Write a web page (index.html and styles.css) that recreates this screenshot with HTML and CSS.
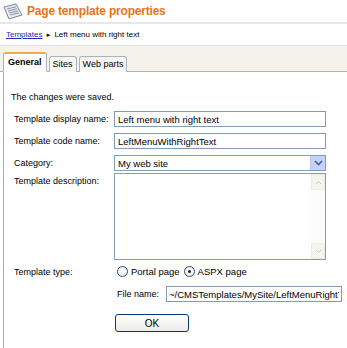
FILE: index.html
```html
<!DOCTYPE html>
<html lang="en">
<head>
    <meta charset="UTF-8">
    <title>Page template properties</title>
    <link rel="stylesheet" href="styles.css">
</head>
<body>
    <div class="header">
        <svg class="header-icon" width="22" height="17" viewBox="0 0 22 17">
            <path d="M2 4 L14 1 L20 12 L7 16 Z" fill="#e6eaf0" stroke="#7b8796" stroke-width="1"/>
            <path d="M5 6 L14 3.8 M6 8 L15 5.8 M7 10 L16 7.8 M8 12 L17 9.8" stroke="#8a96a6" stroke-width="1"/>
        </svg>
        <h1>Page template properties</h1>
    </div>

    <div class="breadcrumb">
        <a href="#">Templates</a>
        <span class="arrow">&#9658;</span>
        <span>Left menu with right text</span>
    </div>

    <div class="tabs">
        <div class="tab active">General</div>
        <div class="tab">Sites</div>
        <div class="tab">Web parts</div>
    </div>

    <div class="content">
        <p class="info">The changes were saved.</p>

        <div class="row">
            <label>Template display name:</label>
            <input class="field" type="text" value="Left menu with right text">
        </div>

        <div class="row">
            <label>Template code name:</label>
            <input class="field" type="text" value="LeftMenuWithRightText">
        </div>

        <div class="row">
            <label>Category:</label>
            <div class="select">
                <span>My web site</span>
                <span class="select-btn">
                    <svg width="9" height="6" viewBox="0 0 9 6"><path d="M1 1 L4.5 4.5 L8 1" fill="none" stroke="#4d6185" stroke-width="1.6"/></svg>
                </span>
            </div>
        </div>

        <div class="row row-top row-desc">
            <label>Template description:</label>
            <div class="textarea">
                <div class="scrollbar">
                    <span class="sb-arrow">
                        <svg width="7" height="5" viewBox="0 0 7 5"><path d="M1 4 L3.5 1.5 L6 4" fill="none" stroke="#c4c8ce" stroke-width="1"/></svg>
                    </span>
                    <span class="sb-arrow">
                        <svg width="7" height="5" viewBox="0 0 7 5"><path d="M1 1 L3.5 3.5 L6 1" fill="none" stroke="#c4c8ce" stroke-width="1"/></svg>
                    </span>
                </div>
            </div>
        </div>

        <div class="row row-top row-type">
            <label>Template type:</label>
            <div class="type">
                <div class="radios">
                    <span class="radio"></span><span class="radio-text">Portal page</span>
                    <span class="radio checked"></span><span class="radio-text">ASPX page</span>
                </div>
                <div class="file-row">
                    <span>File name:</span>
                    <input class="field file" type="text" value="~/CMSTemplates/MySite/LeftMenuRightText.aspx">
                </div>
            </div>
        </div>

        <div class="row row-ok">
            <label></label>
            <button class="ok">OK</button>
        </div>
    </div>
</body>
</html>
```

FILE: styles.css
```css
body {
    margin: 0;
    font-family: "Liberation Sans", Arial, sans-serif;
    font-size: 9px;
    color: #000;
    background: #fff;
    width: 347px;
    height: 348px;
    overflow: hidden;
}
.header {
    display: flex;
    align-items: center;
    height: 22px;
    padding-left: 2px;
    border-bottom: 2px solid #e8e8e8;
}
.header-icon {
    margin-right: 3px;
}
h1 {
    margin: 0;
    font-size: 12px;
    font-weight: bold;
    color: #e8741e;
    letter-spacing: -0.2px;
}
.breadcrumb {
    display: flex;
    align-items: center;
    height: 21px;
    padding-left: 6px;
    font-size: 8px;
    white-space: nowrap;
    border-bottom: 1px solid #e4e4e4;
}
.breadcrumb a {
    color: #1f2cbd;
}
.breadcrumb .arrow {
    font-size: 6px;
    margin: 0 3px;
}
.tabs {
    display: flex;
    align-items: flex-end;
    gap: 2px;
    height: 25px;
    padding-left: 3px;
    background: #f5f2ea;
    border-bottom: 1px solid #a6b2bd;
}
.tab {
    height: 15px;
    line-height: 15px;
    padding: 0 3px;
    font-size: 9px;
    background: #f8f7f2;
    border: 1px solid #a6b2bd;
    border-bottom: none;
    border-radius: 3px 3px 0 0;
    margin-bottom: -1px;
}
.tab.active {
    height: 17px;
    line-height: 17px;
    font-weight: bold;
    padding: 0 4px;
    background: #fff;
    border-top: 2px solid #f0a94a;
    border-bottom: 1px solid #fff;
}
.content {
    margin-left: 3px;
    border-left: 1px solid #a6b2bd;
    height: 290px;
    padding: 0 0 0 10px;
}
.info {
    margin: 0 0 0 -3px;
    padding-top: 20px;
    height: 19px;
    font-size: 9px;
}
.row {
    display: flex;
    align-items: center;
    margin-bottom: 6px;
    white-space: nowrap;
}
.row label {
    width: 100px;
    flex: none;
}
.row-top {
    align-items: flex-start;
}
.row-desc {
    margin-top: -4px;
    margin-bottom: 4px;
}
.row-desc label,
.row-type label {
    padding-top: 3px;
}
.field {
    box-sizing: border-box;
    height: 16px;
    padding: 0 3px;
    border: 1px solid #7f9db9;
    font-family: "Liberation Sans", Arial, sans-serif;
    font-size: 9.5px;
    width: 212px;
}
.select {
    box-sizing: border-box;
    display: flex;
    align-items: center;
    justify-content: space-between;
    width: 212px;
    height: 16px;
    border: 1px solid #7f9db9;
    font-size: 9.5px;
    padding-left: 3px;
}
.select-btn {
    display: flex;
    align-items: center;
    justify-content: center;
    width: 14px;
    height: 14px;
    background: #c3d3fd;
    border-left: 1px solid #b8c8f0;
}
.textarea {
    box-sizing: border-box;
    width: 212px;
    height: 87px;
    border: 1px solid #7f9db9;
    display: flex;
    justify-content: flex-end;
}
.scrollbar {
    width: 14px;
    background: #fcfcfa;
    display: flex;
    flex-direction: column;
    justify-content: space-between;
}
.sb-arrow {
    display: flex;
    align-items: center;
    justify-content: center;
    height: 14px;
    background: #f4f4f0;
    border: 1px solid #ecece6;
}
.type {
    display: flex;
    flex-direction: column;
    gap: 8px;
}
.radios {
    display: flex;
    align-items: center;
    height: 14px;
}
.radio {
    box-sizing: border-box;
    width: 11px;
    height: 11px;
    border: 1px solid #1c5180;
    border-radius: 50%;
    margin: 0 3px 0 3px;
    display: flex;
    align-items: center;
    justify-content: center;
    background: #f6f6f2;
}
.radio.checked::after {
    content: "";
    width: 3px;
    height: 3px;
    border-radius: 50%;
    background: #222;
}
.radio-text {
    font-size: 9.5px;
}
.radios .radio-text:nth-child(2) {
    margin-right: 1px;
}
.file-row {
    display: flex;
    align-items: center;
    gap: 7px;
    padding-left: 3px;
}
.field.file {
    width: 176px;
    padding: 0 2px;
}
.row-ok {
    margin-top: 12px;
}
.ok {
    margin-left: 1px;
    width: 74px;
    height: 18px;
    padding: 0;
    font-family: "Liberation Sans", Arial, sans-serif;
    font-size: 10px;
    background: linear-gradient(#fefefe, #ecebe6);
    border: 1px solid #003c74;
    border-radius: 3px;
    color: #000;
}
```
